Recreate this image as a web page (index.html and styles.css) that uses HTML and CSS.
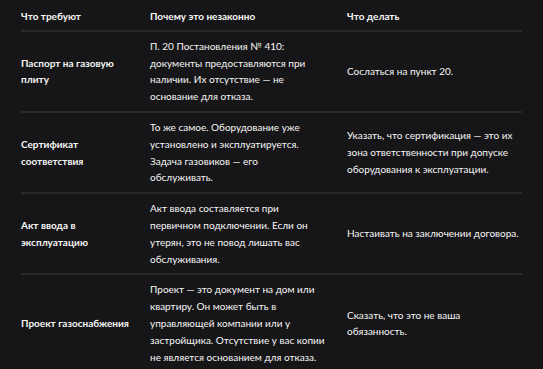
FILE: index.html
```html
<!DOCTYPE html>
<html lang="ru">
<head>
<meta charset="utf-8">
<link rel="stylesheet" href="styles.css">
</head>
<body>
<div class="wrap">
<table class="docs">
  <colgroup><col class="c1"><col class="c2"><col class="c3"></colgroup>
  <thead>
    <tr><th>Что требуют</th><th>Почему это незаконно</th><th>Что делать</th></tr>
  </thead>
  <tbody>
    <tr>
      <td class="name">Паспорт на газовую плиту</td>
      <td>П. 20 Постановления № 410: документы предоставляются при наличии. Их отсутствие — не основание для отказа.</td>
      <td>Сослаться на пункт 20.</td>
    </tr>
    <tr>
      <td class="name">Сертификат соответствия</td>
      <td>То же самое. Оборудование уже установлено и эксплуатируется. Задача газовиков — его<br>обслуживать.</td>
      <td>Указать, что сертификация — это их зона ответственности при допуске оборудования к эксплуатации.</td>
    </tr>
    <tr>
      <td class="name">Акт ввода в эксплуатацию</td>
      <td>Акт ввода составляется при первичном подключении. Если он утерян, это не повод лишать вас обслуживания.</td>
      <td>Настаивать на заключении договора.</td>
    </tr>
    <tr>
      <td class="name">Проект газоснабжения</td>
      <td>Проект — это документ на дом или квартиру. Он может быть в управляющей компании или у застройщика. Отсутствие у вас копии не является основанием для отказа.</td>
      <td>Сказать, что это не ваша обязанность.</td>
    </tr>
  </tbody>
</table>
</div>
</body>
</html>
```
FILE: styles.css
```css
html, body {
  margin: 0;
  background: #161618;
}
.wrap {
  padding: 0 21px;
}
.docs {
  width: 100%;
  table-layout: fixed;
  border-collapse: separate;
  border-spacing: 0;
  font-family: Lato, "Liberation Sans", sans-serif;
  font-size: 10px;
  line-height: 16.8px;
  color: #f6f6f6;
}
.c1 { width: 129px; }
.c2 { width: 197px; }
.c3 { width: 175px; }
.docs th, .docs td {
  text-align: left;
  vertical-align: middle;
  padding: 6px 20px 6px 0;
  border-bottom: 2px solid #2a2a2c;
}
.docs th {
  font-weight: 700;
  padding-top: 8px;
  padding-bottom: 5px;
}
.docs th:last-child, .docs td:last-child {
  padding-right: 0;
}
.docs td.name {
  font-weight: 700;
}
```
